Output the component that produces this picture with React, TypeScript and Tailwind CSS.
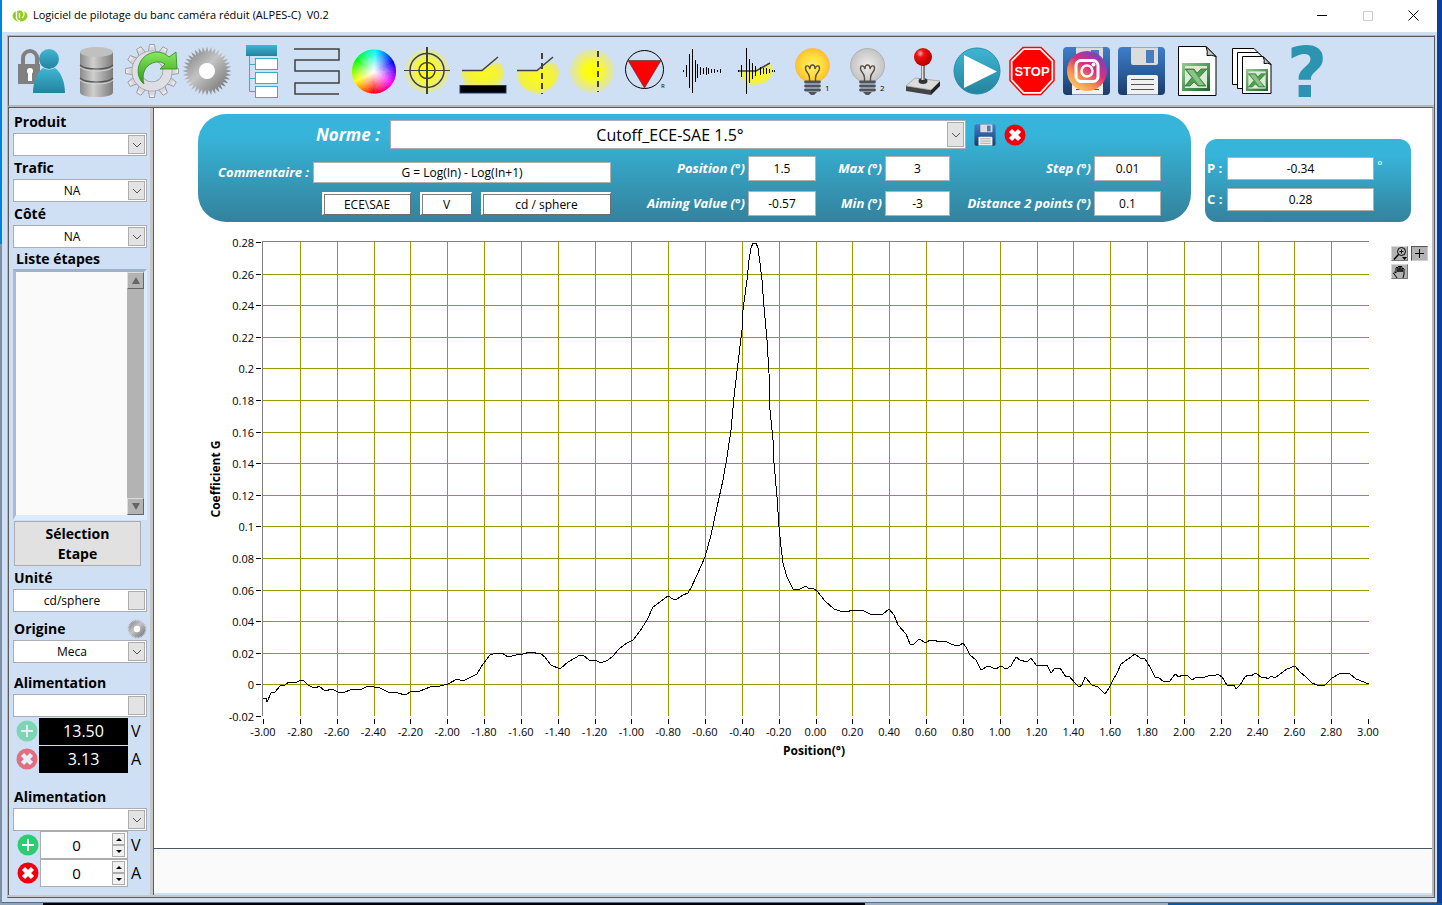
import { useId, useState } from "react";
import type { ReactNode } from "react";
import clsx from "clsx";

/* ---------- shared svg paints ---------- */

function Paints() {
  return (
    <svg className="absolute size-0" aria-hidden="true">
      <defs>
        <linearGradient id="teal" x1="0" y1="0" x2="0" y2="1">
          <stop offset="0" stopColor="#3fb6d3" />
          <stop offset="1" stopColor="#23839e" />
        </linearGradient>
        <linearGradient id="steel" x1="0" y1="0" x2="1" y2="0">
          <stop offset="0" stopColor="#8a8a8a" />
          <stop offset="0.4" stopColor="#cfcfcf" />
          <stop offset="1" stopColor="#7c7c7c" />
        </linearGradient>
        <linearGradient id="silver" x1="0" y1="0" x2="0" y2="1">
          <stop offset="0" stopColor="#f4f4f6" />
          <stop offset="0.5" stopColor="#d3d3da" />
          <stop offset="1" stopColor="#f0f0f4" />
        </linearGradient>
        <linearGradient id="burst" x1="0" y1="0" x2="1" y2="1">
          <stop offset="0" stopColor="#6f6f6f" />
          <stop offset="0.45" stopColor="#c4c4c4" />
          <stop offset="1" stopColor="#5f5f5f" />
        </linearGradient>
        <linearGradient id="leaf" x1="0" y1="0" x2="0" y2="1">
          <stop offset="0" stopColor="#8be85e" />
          <stop offset="1" stopColor="#2c9a1f" />
        </linearGradient>
        <linearGradient id="floppy" x1="0" y1="0" x2="0" y2="1">
          <stop offset="0" stopColor="#3f7ecb" />
          <stop offset="0.5" stopColor="#2c5f9f" />
          <stop offset="1" stopColor="#1c3c68" />
        </linearGradient>
        <linearGradient id="insta" x1="0.1" y1="1" x2="0.8" y2="0">
          <stop offset="0" stopColor="#ffdc72" />
          <stop offset="0.35" stopColor="#fb8a4a" />
          <stop offset="0.6" stopColor="#d62f7f" />
          <stop offset="1" stopColor="#6a45cf" />
        </linearGradient>
        <linearGradient id="excel" x1="0" y1="0" x2="1" y2="1">
          <stop offset="0" stopColor="#8fc48a" />
          <stop offset="1" stopColor="#1f6b2c" />
        </linearGradient>
        <radialGradient id="glow">
          <stop offset="0" stopColor="#ffff00" />
          <stop offset="0.4" stopColor="#fbfb1c" />
          <stop offset="0.75" stopColor="#e6ea8c" />
          <stop offset="1" stopColor="#dbe6b4" />
        </radialGradient>
        <radialGradient id="beam">
          <stop offset="0" stopColor="#fbf91c" />
          <stop offset="0.7" stopColor="#f3f23c" />
          <stop offset="1" stopColor="#e8ea78" />
        </radialGradient>
        <radialGradient id="lampOn">
          <stop offset="0" stopColor="#ffec6e" />
          <stop offset="0.6" stopColor="#ffdd3c" />
          <stop offset="1" stopColor="#fdc02e" />
        </radialGradient>
        <radialGradient id="lampOff">
          <stop offset="0" stopColor="#ededed" />
          <stop offset="1" stopColor="#c4c4c4" />
        </radialGradient>
        <radialGradient id="ball" cx="0.35" cy="0.3" r="0.7">
          <stop offset="0" stopColor="#ffb0b0" />
          <stop offset="0.3" stopColor="#f01010" />
          <stop offset="1" stopColor="#b00000" />
        </radialGradient>
        <radialGradient id="whiteCore">
          <stop offset="0" stopColor="#fff" />
          <stop offset="1" stopColor="#fff" stopOpacity="0" />
        </radialGradient>
      </defs>
    </svg>
  );
}

function star(cx: number, cy: number, outer: number, inner: number, teeth: number) {
  const pts: string[] = [];
  for (let i = 0; i < teeth * 2; i++) {
    const r = i % 2 ? inner : outer;
    const a = (i * Math.PI) / teeth;
    pts.push(`${(cx + r * Math.sin(a)).toFixed(1)},${(cy - r * Math.cos(a)).toFixed(1)}`);
  }
  return pts.join(" ");
}

/* ---------- icons, drawn in a 54x56 box ---------- */

function Users() {
  return (
    <>
      <path d="M8 23V15a7 7 0 0 1 14 0v8" fill="none" stroke="#808080" strokeWidth="4" />
      <rect x="3" y="21" width="22" height="20" fill="#808080" />
      <circle cx="15" cy="28" r="3" fill="#fff" />
      <rect x="13" y="29" width="4" height="9" fill="#fff" />
      <circle cx="34" cy="16" r="10" fill="url(#teal)" />
      <path d="M18 50C18 39 22 29 28 25q6 3 12 0C46 29 50 39 50 50Z" fill="url(#teal)" />
    </>
  );
}

function Database() {
  return (
    <>
      <path d="M10 9v40q0 5 16.500 5t16.500-5V9Z" fill="url(#steel)" />
      <ellipse cx="26.500" cy="9" rx="16.500" ry="5" fill="#c0c0c0" />
      <path d="M10 22q4 4 16.500 4t16.500-4M10 35q4 4 16.500 4t16.500-4" fill="none" stroke="#555" strokeWidth="1.200" />
      <path d="M10 24q4 4 16.500 4t16.500-4M10 37q4 4 16.500 4t16.500-4" fill="none" stroke="#d4d4d4" />
    </>
  );
}

function GearRefresh() {
  return (
    <>
      {Array.from({ length: 12 }, (_, i) => (
        <path
          key={i}
          d="M24.500 1.500h5l1.500 9h-8Z"
          fill="url(#silver)"
          stroke="#8f8f98"
          strokeWidth="0.800"
          transform={`rotate(${i * 30} 27 28)`}
        />
      ))}
      <circle cx="27" cy="28" r="15.500" fill="none" stroke="#9c9ca6" strokeWidth="10" />
      <circle cx="27" cy="28" r="15.500" fill="none" stroke="#dedee5" strokeWidth="8.500" />
      <path
        d="M19 41C9 34 11 11 31 9q8 0 13 5l7-5 1 17H35l5-5q-4-3-9-2c-11 2-15 12-12 22Z"
        fill="url(#leaf)"
        stroke="#2c8c1c"
        strokeWidth="0.800"
      />
    </>
  );
}

function Burst() {
  return (
    <>
      <polygon points={star(27, 28, 24.5, 19, 36)} fill="url(#burst)" />
      <circle cx="27" cy="28" r="8" fill="#fff" />
    </>
  );
}

function Tree() {
  return (
    <>
      <path d="M14.500 13v35.500H21M14.500 21.500H21M14.500 35.500H21" fill="none" stroke="#3fa9c6" />
      <rect x="11" y="2" width="31" height="11" fill="url(#teal)" />
      <g fill="#fff" stroke="#3fa9c6">
        <rect x="20.500" y="15.500" width="22" height="11" />
        <rect x="20.500" y="29.500" width="22" height="11" />
        <rect x="20.500" y="43.500" width="22" height="11" />
      </g>
    </>
  );
}

function Snake() {
  return <path d="M4 6h45v11H5v11h44v12H5v11h44" fill="none" stroke="#404040" strokeWidth="1.500" />;
}

function ColorWheel() {
  return (
    <>
      {Array.from({ length: 72 }, (_, i) => (
        <path
          key={i}
          d="M29 28.500V6.500a22 22 0 0 1 2.500 0.150Z"
          fill={`hsl(${180 + i * 5} 100% 50%)`}
          transform={`rotate(${i * 5} 29 28.500)`}
        />
      ))}
      <circle cx="29" cy="28.500" r="21" fill="url(#whiteCore)" />
    </>
  );
}

function Target() {
  return (
    <>
      <circle cx="27" cy="28" r="22" fill="url(#glow)" />
      <g fill="none" stroke="#404040">
        <circle cx="27" cy="27.500" r="17" strokeWidth="1.500" />
        <circle cx="27" cy="27.500" r="8" strokeWidth="1.500" />
        <path d="M4 27.500h46" />
        <path d="M27 4v47" strokeWidth="2" />
      </g>
    </>
  );
}

function CutoffFlat() {
  return (
    <>
      <path d="M7 28h20l13-9q8 1 9 8 1 10-7 16H12q-6-6-5-15Z" fill="url(#beam)" />
      <path d="M7 27.500h20L43 14" fill="none" stroke="#404040" strokeWidth="1.500" />
      <rect x="5" y="42.500" width="46" height="7.500" fill="#000" stroke="#1f3864" />
    </>
  );
}

function CutoffAxis() {
  return (
    <>
      <path d="M7 28h20l13-9q8 1 9 9c0 12-10 22-22 22S6 40 7 28Z" fill="url(#beam)" />
      <path d="M7 27.500h20L43 14" fill="none" stroke="#404040" strokeWidth="1.500" />
      <path d="M32 10v41" stroke="#404040" strokeWidth="2" strokeDasharray="6 4" />
    </>
  );
}

function Spot() {
  return (
    <>
      <circle cx="27" cy="28" r="22" fill="url(#glow)" />
      <path d="M33 8v41" stroke="#404040" strokeWidth="2" strokeDasharray="6 4" />
    </>
  );
}

function Reflector() {
  return (
    <>
      <circle cx="24.500" cy="26.500" r="19" fill="none" stroke="#000" />
      <path d="M8 17.500h33L24.500 45Z" fill="#f00" stroke="#444" strokeWidth="0.700" />
      <text x="41" y="45" fontSize="6">R</text>
    </>
  );
}

const waveBars = [[8, 1], [11, 6], [14, 17], [17, 22], [20, 11], [22, 7], [25, 4], [28, 3], [31, 4], [33, 3], [36, 2], [39, 2], [42, 1], [45, 2]];
const cutBars = [[8, 1], [11, 6], [16, 23], [19, 12], [22, 8], [25, 5], [30, 4], [33, 3], [36, 3], [39, 2], [42, 1], [44, 1]];

function Bars({ bars }: { bars: number[][] }) {
  return <path d={bars.map(([x, h]) => `M${x + 0.5} ${28 - h}v${h * 2}`).join("")} stroke="#000" />;
}

function CutWave() {
  return (
    <>
      <path d="M10 28h16l14-8q5 6 2 12-6 10-18 10-13 0-14-14Z" fill="url(#beam)" />
      <path d="M8 28h18l14-8" fill="none" stroke="#404040" strokeWidth="1.500" />
      <Bars bars={cutBars} />
    </>
  );
}

function Lamp({ on, mark }: { on?: boolean; mark: string }) {
  return (
    <>
      <circle cx="27.500" cy="22.500" r="17" fill={on ? "url(#lampOn)" : "url(#lampOff)"} stroke={on ? "#fcb65c" : "#a8a8a8"} strokeWidth="0.800" />
      <path
        d="M24.500 38.500V35q0-3-2.500-6t-1-6q3-1 4 3 0-4 2.500-4t2.500 4q1-4 4-3 1.500 3-1 6t-2.500 6v3.500"
        fill="none"
        stroke="#55493a"
        strokeWidth="1.300"
      />
      <path d="M20.500 39h14M20.500 43h14M20.500 47h14" stroke="#4f545c" strokeWidth="2.800" strokeLinecap="round" />
      <path d="M23 49h9l-3 3h-3Z" fill="#4f545c" />
      <text x="40" y="48" fontSize="8">{mark}</text>
    </>
  );
}

function Joystick() {
  return (
    <>
      <path d="M11 43l25 4v5l-25-4Z" fill="#444" />
      <path d="M36 47l9-9v5l-9 9Z" fill="#222" />
      <path d="M11 43l9-8 25 3-9 9Z" fill="#dcdcdc" stroke="#888" strokeWidth="0.600" />
      <ellipse cx="28" cy="38" rx="4.500" ry="3" fill="#333" />
      <path d="M28 20v17" stroke="#777" strokeWidth="4" />
      <path d="M27.500 20v17" stroke="#ddd" strokeWidth="1.500" />
      <circle cx="28" cy="14" r="9" fill="url(#ball)" />
    </>
  );
}

function Play() {
  return (
    <>
      <circle cx="27" cy="28" r="23" fill="url(#teal)" stroke="#2a8ba6" />
      <path d="M14 12l33 16.500L14 45Z" fill="#fff" />
    </>
  );
}

function Stop() {
  return (
    <>
      <path d="M18 4.500h18l13 13v20L36 51.500H18l-13-14v-20Z" fill="#fff" stroke="#f00" strokeWidth="1.500" />
      <path d="M19 7h16l11.500 11.500v18L35 49H19L7.500 36.500v-18Z" fill="#f00" />
      <text x="27" y="33" textAnchor="middle" fontSize="13" className="fill-white font-['Liberation_Sans',sans-serif] font-bold">
        STOP
      </text>
    </>
  );
}

function Floppy() {
  return (
    <>
      <rect x="3" y="4" width="47" height="48" rx="4" fill="url(#floppy)" />
      <path d="M16 4.500h27V20q0 2-2 2H18q-2 0-2-2Z" fill="#dcdcdc" />
      <rect x="31" y="7" width="8" height="13" fill="#4a7cc0" />
      <path d="M12 34q0-2 2-2h27q2 0 2 2v17.500H12Z" fill="#f0f0f0" />
      <path d="M16 36.500h23M16 41.500h23M16 46.500h23" stroke="#555" />
    </>
  );
}

function FloppyInsta() {
  return (
    <>
      <Floppy />
      <circle cx="27" cy="28" r="20" fill="url(#insta)" />
      <rect x="16" y="17.500" width="22" height="21" rx="5" fill="none" stroke="#fff" strokeWidth="3" />
      <circle cx="27" cy="28" r="5.500" fill="none" stroke="#fff" strokeWidth="2.500" />
      <circle cx="33.500" cy="21.500" r="2" fill="#fff" />
    </>
  );
}

function ExcelMark({ x, y, size }: { x: number; y: number; size: number }) {
  return (
    <svg x={x} y={y} width={size} height={size} viewBox="0 0 28 28">
      <rect x="1.500" y="1.500" width="25" height="25" fill="#dcebd6" stroke="url(#excel)" strokeWidth="3" />
      <path d="M3 6h9l3 4 4-4h6l-8 8.500L24 23h-8l-4-4-4 4H3l7-8.500Z" fill="#4f9d50" stroke="#1f6b2c" strokeWidth="0.700" />
      <path d="M5 7h6l11 15h-5Z" fill="#8cc487" />
    </svg>
  );
}

function Excel() {
  return (
    <>
      <path d="M8.500 3.500H36l10 10v39H8.500Z" fill="#fff" stroke="#000" />
      <path d="M36 3.500q2 5 1 9 4-1 9 1Z" fill="#c8c8c8" stroke="#000" />
      <ExcelMark x={12} y={20} size={28} />
    </>
  );
}

function ExcelStack() {
  return (
    <>
      <path d="M7.500 5.500H29l8 8v28H7.500Z" fill="#fff" stroke="#000" />
      <path d="M12.500 9.500H33l8 8v28H12.500Z" fill="#fff" stroke="#000" />
      <path d="M17.500 13.500H38l8 8v29H17.500Z" fill="#fff" stroke="#000" />
      <path d="M38 13.500q2 4 1 7 4-1 7 1Z" fill="#c8c8c8" stroke="#000" />
      <ExcelMark x={21} y={26} size={22} />
    </>
  );
}

function Help() {
  return (
    <text x="27" y="54" textAnchor="middle" fontSize="70" className="fill-[#2c93b0] font-['DejaVu_Sans',sans-serif] font-bold">
      ?
    </text>
  );
}

const tools: [string, ReactNode][] = [
  ["Utilisateurs", <Users />],
  ["Base de données", <Database />],
  ["Recharger", <GearRefresh />],
  ["Réglages", <Burst />],
  ["Arborescence", <Tree />],
  ["Balayage", <Snake />],
  ["Couleur", <ColorWheel />],
  ["Cible", <Target />],
  ["Coupure", <CutoffFlat />],
  ["Axe de coupure", <CutoffAxis />],
  ["Faisceau", <Spot />],
  ["Réflecteur", <Reflector />],
  ["Signal", <Bars bars={waveBars} />],
  ["Signal de coupure", <CutWave />],
  ["Lampe 1", <Lamp on mark="1" />],
  ["Lampe 2", <Lamp mark="2" />],
  ["Pilotage manuel", <Joystick />],
  ["Démarrer", <Play />],
  ["Arrêter", <Stop />],
  ["Enregistrer image", <FloppyInsta />],
  ["Enregistrer", <Floppy />],
  ["Export Excel", <Excel />],
  ["Export multiple", <ExcelStack />],
  ["Aide", <Help />],
];

function AddIcon() {
  return (
    <svg viewBox="0 0 22 22" className="size-[22px]">
      <circle cx="11" cy="11" r="10.500" fill="#2ecc71" />
      <path d="M11 5v12M5 11h12" stroke="#fff" strokeWidth="2" />
    </svg>
  );
}

function RemoveIcon() {
  return (
    <svg viewBox="0 0 22 22" className="size-[22px]">
      <circle cx="11" cy="11" r="10.500" fill="#f0000c" />
      <path d="M6.500 6.500l9 9M15.500 6.500l-9 9" stroke="#fff" strokeWidth="4.500" />
    </svg>
  );
}

/* ---------- form parts ---------- */

type PickerProps = {
  id: string;
  value?: string;
  locked?: boolean;
  className?: string;
};

function Picker({ id, value = "", locked, className }: PickerProps) {
  return (
    <div className={clsx("relative", className)}>
      <select
        id={id}
        defaultValue={value}
        className="block h-full w-full appearance-none border border-[#abadb3] bg-white pr-4 text-center [text-align-last:center]"
      >
        <option>{value}</option>
      </select>
      <span className="pointer-events-none absolute inset-y-[2px] right-[2px] flex w-[17px] items-center justify-center border border-[#adadad] bg-[#e3e3e3]">
        {!locked && (
          <svg viewBox="0 0 10 6" className="h-[6px] w-[10px]">
            <path d="M1 1l4 4 4-4" fill="none" stroke="#555" />
          </svg>
        )}
      </span>
    </div>
  );
}

type SideSelectProps = {
  title: string;
  value?: string;
  locked?: boolean;
  className?: string;
  extra?: ReactNode;
};

function SideSelect({ title, value, locked, className, extra }: SideSelectProps) {
  const id = useId();
  return (
    <div className={className}>
      <div className="flex h-[23px] items-center justify-between pl-px pt-px">
        <label htmlFor={id} className="text-sm font-bold">{title}</label>
        {extra}
      </div>
      <Picker id={id} value={value} locked={locked} className="h-[23px] text-xs" />
    </div>
  );
}

function Readout({ value, unit, icon }: { value: string; unit: string; icon: ReactNode }) {
  return (
    <div className="flex h-7 items-center">
      <button type="button" aria-label={unit} disabled className="ml-[3px] mr-px opacity-50">{icon}</button>
      <output className="mr-[3px] flex h-[27px] w-[89px] items-center justify-center bg-black text-base text-white">{value}</output>
      <span className="text-base">{unit}</span>
    </div>
  );
}

function Stepper({ unit, icon }: { unit: string; icon: ReactNode }) {
  const id = useId();
  const [value, setValue] = useState(0);
  const key = "flex h-3 w-[13px] items-center justify-center border border-[#adadad] bg-[#f0f0f0]";
  return (
    <div className="flex h-7 items-center">
      <button type="button" aria-label={unit} className="ml-1 mr-px">{icon}</button>
      <div className="mr-[3px] flex h-7 w-[88px] items-center border border-[#abadb3] bg-white pr-[2px]">
        <input
          id={id}
          value={value}
          onChange={(e) => setValue(Number(e.target.value) || 0)}
          className="w-0 min-w-0 flex-1 text-center text-[15px] leading-5 outline-none"
        />
        <div className="flex flex-col">
          <button type="button" aria-label="+" onClick={() => setValue(value + 1)} className={key}>
            <svg viewBox="0 0 6 3" className="h-[3px] w-[6px]"><path d="M0 3l3-3 3 3Z" /></svg>
          </button>
          <button type="button" aria-label="-" onClick={() => setValue(value - 1)} className={key}>
            <svg viewBox="0 0 6 3" className="h-[3px] w-[6px]"><path d="M0 0l3 3 3-3Z" /></svg>
          </button>
        </div>
      </div>
      <label htmlFor={id} className="text-base">{unit}</label>
    </div>
  );
}

function GridField({ label, value }: { label: string; value: string }) {
  const id = useId();
  return (
    <>
      <label htmlFor={id} className="self-center whitespace-nowrap text-right text-[13px] font-bold italic text-white">{label}</label>
      <input id={id} defaultValue={value} className="h-[25px] w-full min-w-0 border border-[#b0b0b0] bg-white text-center text-xs" />
    </>
  );
}

const sunken = "h-[23px] border-t-2 border-l-2 border-r border-b border-t-white border-l-white border-r-[#6e6e6e] border-b-[#6e6e6e] bg-white text-center text-xs shadow-[inset_1px_1px_0_#7e7e7e]";

/* ---------- chart ---------- */

const PLOT_W = 1105;
const PLOT_H = 474;

const trace = `263,698 266,698 267,702 271,693 275,692 280,686 285,685 289,682 297,682 301,680 304,681 308,685 312,687
316,688 319,686 325,691 332,689 338,692 345,692 350,690 355,689 362,689 368,686 380,688 388,692 398,693 405,695 412,691
420,691 430,687 440,686 448,684 457,679 463,681 477,674 483,664 490,655 496,653 502,653 508,657 516,655 523,654 530,652
541,654 545,657 551,665 560,669 568,662 575,658 580,655 583,655 589,660 595,660 601,663 608,660 613,656 619,649 627,643
633,640 640,631 647,620 653,607 660,602 668,596 673,599 677,599 683,595 688,593 691,588 697,575 705,557 711,535 717,507
723,480 727,457 731,430 734,397 738,363 742,330 743,310 747,280 749,260 751,248 753,243 756,243 758,248 760,263 762,280
764,307 767,340 769,373 770,410 773,440 774,463 777,497 779,527 781,547 783,563 787,577 793,589 800,589 806,586 808,588
813,588 817,591 825,601 834,609 840,611 848,612 851,610 862,610 864,611 872,615 883,614 889,609 894,615 898,625 906,634
910,644 913,645 919,639 926,643 930,640 935,640 938,642 945,641 949,643 956,646 960,645 963,643 966,647 970,655 976,660
981,670 988,666 996,669 1001,666 1006,669 1011,666 1016,657 1020,660 1027,662 1031,658 1037,666 1047,665 1051,673
1055,668 1060,668 1066,677 1069,676 1075,683 1079,687 1082,685 1085,677 1092,685 1098,687 1105,694 1109,688 1113,680
1117,673 1121,664 1128,659 1135,654 1140,658 1145,659 1150,667 1155,677 1158,677 1164,682 1170,681 1175,674 1179,677
1182,675 1188,676 1192,680 1197,677 1205,677 1211,675 1214,676 1218,674 1222,677 1227,685 1234,685 1236,689 1240,685
1245,677 1248,675 1251,676 1256,673 1262,678 1265,677 1268,679 1271,676 1275,678 1279,675 1287,669 1295,666 1300,672
1306,677 1312,683 1317,685 1325,685 1332,678 1341,673 1349,673 1356,679 1369,684`;

function Chart() {
  const cols = Array.from({ length: 31 }, (_, i) => i);
  const rows = Array.from({ length: 16 }, (_, i) => i);
  return (
    <svg viewBox="-65 -12 1187 540" className="min-w-0 flex-1" fontSize="11">
      <g shapeRendering="crispEdges">
        {rows.map((i) => {
          const y = Math.round((i * PLOT_H) / 15) + 0.5;
          return (
            <g key={i}>
              {i > 0 && i < 15 && <path d={`M0 ${y}H${PLOT_W + 1}`} stroke="#999900" />}
              <path d={`M-7 ${y}h5`} stroke="#000" />
            </g>
          );
        })}
        {cols.map((i) => {
          const x = Math.round((i * PLOT_W) / 30) + 0.5;
          return (
            <g key={i}>
              {i > 0 && i < 30 && <path d={`M${x} 0V${PLOT_H}`} stroke="#999900" />}
              <path d={`M${x} ${PLOT_H + 3}v5`} stroke="#000" />
            </g>
          );
        })}
        <path d={`M-0.500 ${PLOT_H}V-0.500H${PLOT_W + 1}`} fill="none" stroke="#808080" />
        <polyline points={trace} transform="translate(-263 -242)" fill="none" stroke="#000" />
      </g>
      {rows.map((i) => (
        <text key={i} x="-9" y={(i * PLOT_H) / 15 + 5} textAnchor="end">
          {Number((0.28 - i * 0.02).toFixed(2))}
        </text>
      ))}
      {cols.map((i) => (
        <text key={i} x={(i * PLOT_W) / 30} y="494" textAnchor="middle">
          {(-3 + i * 0.2).toFixed(2).replace("-0.00", "0.00")}
        </text>
      ))}
      <text x="551" y="513" textAnchor="middle" fontSize="12" fontWeight="bold">Position(°)</text>
      <text transform="translate(-43 237) rotate(-90)" textAnchor="middle" fontSize="12" fontWeight="bold">Coefficient G</text>
    </svg>
  );
}

function GraphPalette() {
  const key = "flex h-[15px] w-[17px] items-center justify-center border border-t-[#d8d8d8] border-l-[#d8d8d8] border-r-[#777] border-b-[#777] bg-[#b3b3b3]";
  return (
    <div className="mt-4 grid grid-cols-[17px_17px] content-start gap-[3px]">
      <button type="button" aria-label="Zoom" className={key}>
        <svg viewBox="0 0 15 13" className="h-[13px] w-[15px]" fill="none" stroke="#000">
          <circle cx="9.500" cy="4.500" r="4" />
          <path d="M7.500 4.500h4M9.500 2.500v4" />
          <path d="M6.500 7.500l-4.500 5" strokeWidth="1.500" />
          <path d="M10 10h5l-2.500 3Z" fill="#000" stroke="none" />
        </svg>
      </button>
      <button type="button" aria-label="Curseur" className="flex h-[15px] w-[17px] items-center justify-center border border-t-[#555] border-l-[#555] border-r-[#ccc] border-b-[#ccc] bg-[#b3b3b3]">
        <svg viewBox="0 0 9 9" className="size-[9px]"><path d="M4.500 0v9M0 4.500h9" stroke="#000" /></svg>
      </button>
      <button type="button" aria-label="Main" className={key}>
        <svg viewBox="0 0 15 13" className="h-[13px] w-[15px]" fill="none" stroke="#000">
          <path d="M5 13L1.500 8q1-2 2.500 0V3q1-2 2 0v4V2q1-2 2 0v5V2q1-2 2 0v5V4q1-2 2 0v5l-1 4" />
        </svg>
      </button>
    </div>
  );
}

/* ---------- page ---------- */

function TitleBar() {
  return (
    <header className="flex h-8 items-center bg-white pb-px pl-[10px] pr-[18px]">
      <svg viewBox="0 0 16 12" className="h-3 w-4">
        <ellipse cx="8" cy="6" rx="7.500" ry="5.500" fill="#8fce1c" />
        <path d="M4.500 0v8q1 3 3.500 3M7.500 3v5M10 1.500h1.500q1.500 4-1.500 6.500" fill="none" stroke="#fff" strokeWidth="1.300" />
      </svg>
      <h1 className="ml-[5px] whitespace-pre text-[11px]">Logiciel de pilotage du banc caméra réduit (ALPES-C)  V0.2</h1>
      <div className="ml-auto flex gap-[35px]">
        <button type="button" aria-label="Réduire"><svg viewBox="0 0 11 11" className="size-[11px]"><path d="M1 5.500h10" stroke="#000" /></svg></button>
        <button type="button" aria-label="Agrandir" disabled><svg viewBox="0 0 11 11" className="size-[11px]"><path d="M1.500 1.500h9v9h-9Z" fill="none" stroke="#ccc" /></svg></button>
        <button type="button" aria-label="Fermer"><svg viewBox="0 0 11 11" className="size-[11px]"><path d="M0.500 0.500l10 10M10.500 0.500l-10 10" stroke="#000" /></svg></button>
      </div>
    </header>
  );
}

function Sidebar() {
  const arrow = "flex h-[17px] items-center justify-center border border-t-[#ddd] border-l-[#ddd] border-r-[#666] border-b-[#666]";
  return (
    <aside className="flex w-[145px] shrink-0 flex-col border-l border-r-[3px] border-l-[#5a5a5a] border-r-[#c8c8c8] pl-1 pt-[2px]">
      <div className="flex w-[134px] flex-col">
        <SideSelect title="Produit" />
        <SideSelect title="Trafic" value="NA" />
        <SideSelect title="Côté" value="NA" />
        <h2 className="h-[21px] pl-[3px] pt-px text-sm font-bold">Liste étapes</h2>
        <div className="flex h-[251px] justify-between border-[3px] border-b-[5px] border-t-[#9fb0cb] border-l-[#a9bad6] border-r-[#dcebfd] border-b-[#dcebfd] bg-[#fafafa]">
          <ul className="flex-1" />
          <div className="flex w-[17px] flex-col justify-between bg-[#b3b3b3]">
            <button type="button" aria-label="Monter" className={arrow}>
              <svg viewBox="0 0 8 7" className="h-[7px] w-2"><path d="M4 0l4 7H0Z" fill="#666" /></svg>
            </button>
            <button type="button" aria-label="Descendre" className={arrow}>
              <svg viewBox="0 0 8 7" className="h-[7px] w-2"><path d="M4 7l4-7H0Z" fill="#666" /></svg>
            </button>
          </div>
        </div>
        <button type="button" className="ml-px mr-[6px] mt-px h-[45px] border border-[#adadad] bg-[#e1e1e1] text-sm font-bold leading-5">
          Sélection<br />Etape
        </button>
        <SideSelect title="Unité" value="cd/sphere" locked />
        <SideSelect
          title="Origine"
          value="Meca"
          className="mt-[5px]"
          extra={
            <button type="button" aria-label="Régler l'origine">
              <svg viewBox="2 3 50 50" className="size-5"><Burst /></svg>
            </button>
          }
        />
        <SideSelect title="Alimentation" locked className="mt-2" />
        <Readout value="13.50" unit="V" icon={<AddIcon />} />
        <Readout value="3.13" unit="A" icon={<RemoveIcon />} />
        <SideSelect title="Alimentation" className="mt-3" />
        <Stepper unit="V" icon={<AddIcon />} />
        <Stepper unit="A" icon={<RemoveIcon />} />
      </div>
    </aside>
  );
}

function NormPanel() {
  return (
    <section className="flex-1 rounded-[28px] bg-gradient-to-b from-[#36b4d9] from-20% to-[#33829c] pb-[6px] pr-[30px] pt-[6px]">
      <div className="flex items-center pr-[135px]">
        <label htmlFor="norme" className="w-[192px] pr-[10px] text-right text-[17px] leading-6 font-bold italic text-white">Norme :</label>
        <Picker id="norme" value="Cutoff_ECE-SAE 1.5°" className="h-[29px] flex-1 text-base" />
        <button type="button" aria-label="Enregistrer la norme" className="ml-2">
          <svg viewBox="2 3 49 50" className="h-6 w-[22px]"><Floppy /></svg>
        </button>
        <button type="button" aria-label="Supprimer la norme" className="ml-2"><RemoveIcon /></button>
      </div>
      <div className="mt-[7px] flex items-end">
        <div className="flex flex-1 flex-col gap-[9px] pb-px">
          <div className="flex items-center">
            <label htmlFor="commentaire" className="w-[115px] whitespace-nowrap pr-1 text-right text-[13px] font-bold italic text-white">Commentaire :</label>
            <input id="commentaire" defaultValue="G = Log(In) - Log(In+1)" className="h-[21px] w-0 min-w-0 flex-1 border border-[#b0b0b0] bg-white text-center text-xs" />
          </div>
          <div className="flex gap-[9px] pl-[124px]">
            <input aria-label="Type" defaultValue="ECE\SAE" className={clsx(sunken, "w-[89px]")} />
            <input aria-label="Axe" defaultValue="V" className={clsx(sunken, "w-[52px]")} />
            <input aria-label="Unité de mesure" defaultValue="cd / sphere" className={clsx(sunken, "w-0 min-w-0 flex-1")} />
          </div>
        </div>
        <div className="grid grid-cols-[134px_68px_63px_65px_138px_67px] gap-x-[3px] gap-y-[10px]">
          <GridField label="Position (°)" value="1.5" />
          <GridField label="Max (°)" value="3" />
          <GridField label="Step (°)" value="0.01" />
          <GridField label="Aiming Value (°)" value="-0.57" />
          <GridField label="Min (°)" value="-3" />
          <GridField label="Distance 2 points (°)" value="0.1" />
        </div>
      </div>
    </section>
  );
}

function ResultPanel() {
  const box = "h-[23px] w-full min-w-0 border border-[#b0b0b0] bg-white text-center text-xs text-black";
  return (
    <section className="grid w-[206px] grid-cols-[18px_1fr_35px] content-start items-center gap-x-[2px] gap-y-2 rounded-xl bg-gradient-to-b from-[#36b4d9] from-20% to-[#33829c] pb-[11px] pl-[2px] pt-[18px] text-white">
      <label htmlFor="res-p" className="whitespace-nowrap text-[13px] font-bold">P :</label>
      <input id="res-p" readOnly value="-0.34" className={box} />
      <span className="self-start pl-px text-[13px] leading-4">°</span>
      <label htmlFor="res-c" className="whitespace-nowrap text-[13px] font-bold">C :</label>
      <input id="res-c" readOnly value="0.28" className={box} />
    </section>
  );
}

export default function App() {
  return (
    <div className="flex min-h-screen flex-col bg-[linear-gradient(to_right,transparent_50%,#0a3fa0_50%),linear-gradient(#0084d8_27%,#7c8fa6_27%)] font-['Open_Sans','Noto_Sans',sans-serif] text-black">
      <Paints />
      <div className="ml-[2px] mr-[5px] flex flex-1 flex-col">
        <TitleBar />
        <div className="flex flex-1 flex-col border-b border-[#5d6b7c] bg-[#d0e0f4] pb-1 pl-[5px] pr-[2px] pt-[3px]">
          <div className="flex flex-1 flex-col border border-[#b4b4b4] border-r-[#5a5a5a] border-b-[#5a5a5a]">
            <nav className="flex h-[71px] items-center border-t border-l border-b-2 border-t-[#5a5a5a] border-l-[#5a5a5a] border-b-[#b8b8b8] pl-[5px]">
              {tools.map(([name, icon]) => (
                <button key={name} type="button" aria-label={name} className="w-[55px] shrink-0">
                  <svg viewBox="-1 0 55 56" className="block h-14 w-[55px] overflow-visible">{icon}</svg>
                </button>
              ))}
            </nav>
            <div className="flex flex-1 border-t border-r-2 border-b-2 border-t-[#5a5a5a] border-r-[#b8b8b8] border-b-[#c8c8c8]">
              <Sidebar />
              <main className="flex min-w-0 flex-1 flex-col border-l border-[#5a5a5a] bg-white">
                <div className="flex items-end gap-[14px] pl-11 pr-[21px] pt-[6px]">
                  <NormPanel />
                  <ResultPanel />
                </div>
                <div className="mt-2 flex flex-1 items-start gap-[6px] pl-11 pr-1">
                  <Chart />
                  <GraphPalette />
                </div>
                <footer className="h-[47px] border-t border-b-2 border-t-[#4a5568] border-b-[#d0e0f4] bg-[#fafafa]" />
              </main>
            </div>
          </div>
        </div>
      </div>
      <div className="flex h-[2px]">
        <div className="w-[3%] bg-[#8fa3ba]" />
        <div className="w-[57%] bg-black" />
        <div className="w-[21%] bg-[#9fb0bd]" />
        <div className="flex-1 bg-[#0a58a8]" />
      </div>
    </div>
  );
}
